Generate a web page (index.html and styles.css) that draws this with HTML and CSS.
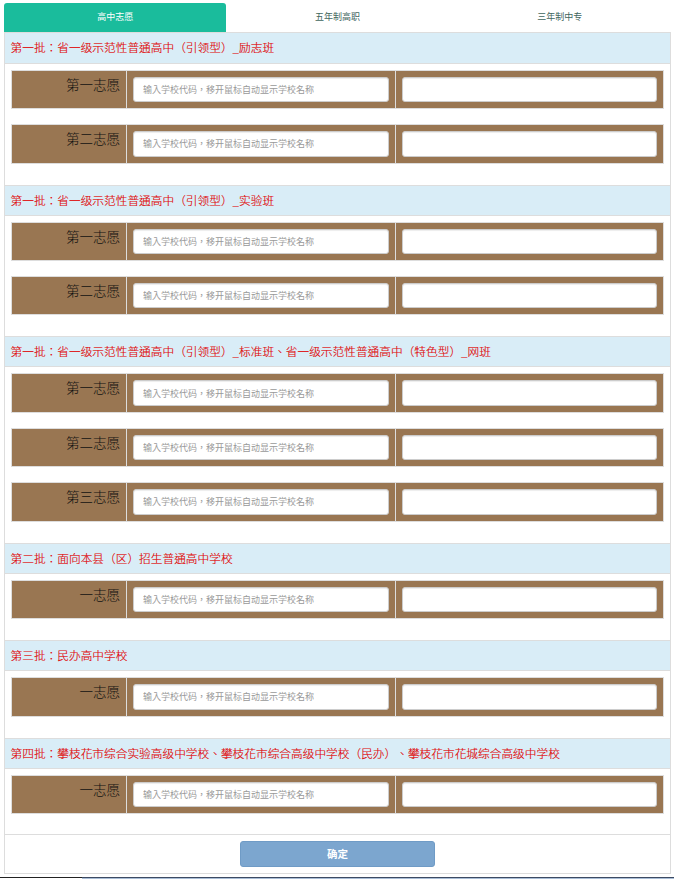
FILE: index.html
```html
<!DOCTYPE html>
<html>
<head>
  <meta charset="UTF-8">
  <title>志愿填报</title>
  <link rel="stylesheet" href="styles.css">
</head>
<body>
  <!-- Tabs -->
  <ul class="tabs">
    <li class="tab active">高中志愿</li>
    <li class="tab">五年制高职</li>
    <li class="tab">三年制中专</li>
  </ul>

  <div class="panel">
    <div class="batch-title">第一批：省一级示范性普通高中（引领型）_励志班</div>
    <div class="batch-body">
      <div class="wish-row">
        <div class="wish-label">第一志愿</div>
        <div class="wish-cell"><input type="text" placeholder="输入学校代码，移开鼠标自动显示学校名称"></div>
        <div class="wish-cell"><input type="text"></div>
      </div>
      <div class="wish-row">
        <div class="wish-label">第二志愿</div>
        <div class="wish-cell"><input type="text" placeholder="输入学校代码，移开鼠标自动显示学校名称"></div>
        <div class="wish-cell"><input type="text"></div>
      </div>
    </div>

    <div class="batch-title">第一批：省一级示范性普通高中（引领型）_实验班</div>
    <div class="batch-body">
      <div class="wish-row">
        <div class="wish-label">第一志愿</div>
        <div class="wish-cell"><input type="text" placeholder="输入学校代码，移开鼠标自动显示学校名称"></div>
        <div class="wish-cell"><input type="text"></div>
      </div>
      <div class="wish-row">
        <div class="wish-label">第二志愿</div>
        <div class="wish-cell"><input type="text" placeholder="输入学校代码，移开鼠标自动显示学校名称"></div>
        <div class="wish-cell"><input type="text"></div>
      </div>
    </div>

    <div class="batch-title">第一批：省一级示范性普通高中（引领型）_标准班、省一级示范性普通高中（特色型）_网班</div>
    <div class="batch-body">
      <div class="wish-row">
        <div class="wish-label">第一志愿</div>
        <div class="wish-cell"><input type="text" placeholder="输入学校代码，移开鼠标自动显示学校名称"></div>
        <div class="wish-cell"><input type="text"></div>
      </div>
      <div class="wish-row">
        <div class="wish-label">第二志愿</div>
        <div class="wish-cell"><input type="text" placeholder="输入学校代码，移开鼠标自动显示学校名称"></div>
        <div class="wish-cell"><input type="text"></div>
      </div>
      <div class="wish-row">
        <div class="wish-label">第三志愿</div>
        <div class="wish-cell"><input type="text" placeholder="输入学校代码，移开鼠标自动显示学校名称"></div>
        <div class="wish-cell"><input type="text"></div>
      </div>
    </div>

    <div class="batch-title">第二批：面向本县（区）招生普通高中学校</div>
    <div class="batch-body">
      <div class="wish-row">
        <div class="wish-label">一志愿</div>
        <div class="wish-cell"><input type="text" placeholder="输入学校代码，移开鼠标自动显示学校名称"></div>
        <div class="wish-cell"><input type="text"></div>
      </div>
    </div>

    <div class="batch-title">第三批：民办高中学校</div>
    <div class="batch-body">
      <div class="wish-row">
        <div class="wish-label">一志愿</div>
        <div class="wish-cell"><input type="text" placeholder="输入学校代码，移开鼠标自动显示学校名称"></div>
        <div class="wish-cell"><input type="text"></div>
      </div>
    </div>

    <div class="batch-title">第四批：攀枝花市综合实验高级中学校、攀枝花市综合高级中学校（民办）、攀枝花市花城综合高级中学校</div>
    <div class="batch-body">
      <div class="wish-row">
        <div class="wish-label">一志愿</div>
        <div class="wish-cell"><input type="text" placeholder="输入学校代码，移开鼠标自动显示学校名称"></div>
        <div class="wish-cell"><input type="text"></div>
      </div>
    </div>

    <div class="panel-footer">
      <button class="submit-btn">确定</button>
    </div>
  </div>

  <!-- Bottom edge of the window -->
  <div class="page-edge">
    <div class="edge-dark"></div>
    <div class="edge-blue"></div>
  </div>
</body>
</html>
```
FILE: styles.css
```css
/* General Styles */
* {
  box-sizing: border-box;
}

html,
body {
  height: 879px;
  overflow: hidden;
}

body {
  margin: 0;
  padding: 3px 3px 0 4px;
  background: #fff;
  font-family: "Noto Sans CJK TC", "Liberation Sans", sans-serif;
  text-spacing-trim: space-all;
  color: #333;
}

/* Tabs */
.tabs {
  display: flex;
  height: 29px;
  margin: 0;
  padding: 0;
  list-style: none;
}

.tab {
  flex: 1;
  text-align: center;
  font-size: 9px;
  line-height: 28px;
  color: #3f665e;
}

.active {
  background: #1abc9c;
  color: #fff;
  border-radius: 3px 3px 0 0;
}

/* Panel */
.panel {
  height: 842px;
  border: 1px solid #ddd;
  border-top: 0;
}

.batch-title {
  height: 31.05px;
  padding-left: 5.5px;
  background: #d9edf7;
  border-top: 1px solid #ddd;
  border-bottom: 1px solid #ddd;
  font-size: 11.7px;
  font-weight: 300;
  line-height: 27px;
  color: #e00000;
  -webkit-text-stroke: 0.15px #e00000;
  white-space: nowrap;
}

.batch-title:first-child {
  height: 31.8px;
  line-height: 28px;
}

.batch-body {
  display: flex;
  flex-direction: column;
  gap: 15px;
  padding: 6px 6px 21px 6px;
}

/* Wish Rows */
.wish-row {
  display: grid;
  grid-template-columns: 115px 269px 1fr;
  height: 39.4px;
  border: 1px solid #ddd;
  background: #997652;
}

.wish-label {
  padding: 3px 6px 0 0;
  border-right: 1px solid #ddd;
  text-align: right;
  font-size: 13.5px;
  font-weight: 300;
  line-height: 20px;
  color: #111;
}

.wish-cell {
  padding: 6px;
  border-right: 1px solid #ddd;
}

.wish-cell:last-child {
  border-right: 0;
}

.wish-cell input {
  display: block;
  width: 100%;
  height: 100%;
  padding: 0 9px;
  background: #fff;
  border: 1px solid #ccc;
  border-radius: 3px;
  box-shadow: inset 0 1px 1px rgba(0, 0, 0, 0.075);
  font-family: inherit;
  font-size: 9px;
  outline: none;
}

.wish-cell input::placeholder {
  color: #999;
}

/* Footer */
.panel-footer {
  display: flex;
  justify-content: center;
  height: 39px;
  margin-top: -1px;
  padding-top: 6px;
  border-top: 1px solid #ddd;
}

.submit-btn {
  width: 195px;
  height: 26px;
  background: #7ca6cf;
  border: 1px solid #6f9bc6;
  border-radius: 3px;
  font-family: inherit;
  font-size: 10.5px;
  font-weight: bold;
  color: #fff;
}

/* Window edge */
.page-edge {
  display: flex;
  height: 2px;
  margin: 3px -3px 0 -4px;
}

.edge-dark {
  width: 82px;
  border-top: 1px solid #222;
}

.edge-blue {
  flex: 1;
  background: #a9bdd6;
  border-top: 1px solid #3c4a63;
}
```
